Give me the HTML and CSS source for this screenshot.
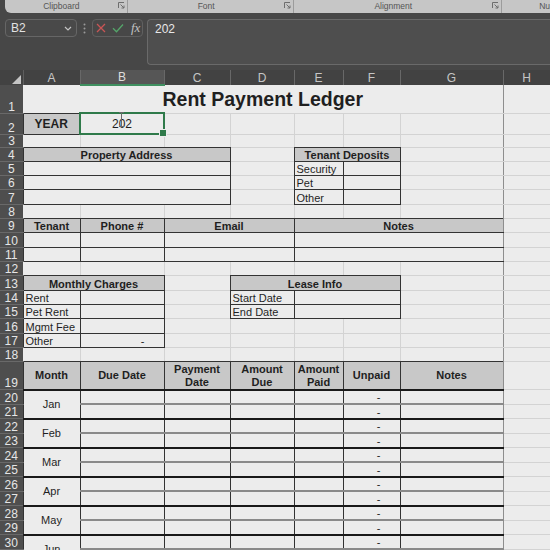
FILE: index.html
```html
<!DOCTYPE html>
<html lang="en">
<head>
    <meta charset="UTF-8">
    <meta name="viewport" content="width=device-width, initial-scale=1.0">
    <title>Rent Payment Ledger</title>
    <link rel="stylesheet" href="styles.css">
</head>
<body>
    <!-- Ribbon group labels -->
    <div class="ribbon">
        <div class="group g-clip">
            <span>Clipboard</span>
            <svg class="launch" width="7" height="7" viewBox="0 0 7 7"><path d="M0.5 6V0.5H6" fill="none" stroke="#6e6e6e"/><path d="M2.5 2.5L6 6M6 3.5V6H3.5" fill="none" stroke="#6e6e6e"/></svg>
        </div>
        <div class="group g-font">
            <span>Font</span>
            <svg class="launch" width="7" height="7" viewBox="0 0 7 7"><path d="M0.5 6V0.5H6" fill="none" stroke="#6e6e6e"/><path d="M2.5 2.5L6 6M6 3.5V6H3.5" fill="none" stroke="#6e6e6e"/></svg>
        </div>
        <div class="group g-align">
            <span>Alignment</span>
            <svg class="launch" width="7" height="7" viewBox="0 0 7 7"><path d="M0.5 6V0.5H6" fill="none" stroke="#6e6e6e"/><path d="M2.5 2.5L6 6M6 3.5V6H3.5" fill="none" stroke="#6e6e6e"/></svg>
        </div>
        <div class="group g-num"><span>Nu</span></div>
    </div>

    <!-- Name box + formula bar -->
    <div class="formula-row">
        <div class="name-box">
            <span>B2</span>
            <svg width="8" height="5" viewBox="0 0 8 5"><path d="M1 1l3 3 3-3" fill="none" stroke="#c4c4c4" stroke-width="1.2"/></svg>
        </div>
        <div class="dots">
            <svg width="3" height="11" viewBox="0 0 3 11"><circle cx="1.5" cy="1.5" r="1" fill="#9a9a9a"/><circle cx="1.5" cy="5.5" r="1" fill="#9a9a9a"/><circle cx="1.5" cy="9.5" r="1" fill="#9a9a9a"/></svg>
        </div>
        <div class="edit-box">
            <svg class="ico-x" width="10" height="10" viewBox="0 0 10 10"><path d="M1 1l8 8M9 1l-8 8" stroke="#c95555" stroke-width="1.3"/></svg>
            <svg class="ico-ok" width="12" height="10" viewBox="0 0 12 10"><path d="M1 5.2l3.5 3.5L11 1.5" fill="none" stroke="#55a56a" stroke-width="1.3"/></svg>
            <span class="fx">fx</span>
        </div>
        <div class="formula">202</div>
    </div>

    <!-- Worksheet -->
    <table class="sheet">
        <colgroup>
            <col class="c-rh"><col class="c-a"><col class="c-b"><col class="c-c"><col class="c-d"><col class="c-e"><col class="c-f"><col class="c-g"><col class="c-h">
        </colgroup>
        <thead>
            <tr class="col-heads">
                <th class="corner"><svg width="9" height="9" viewBox="0 0 9 9"><polygon points="9,0 9,9 0,9" fill="#c4c4c4"/></svg></th>
                <th class="ch">A</th><th class="ch active">B</th><th class="ch">C</th><th class="ch">D</th><th class="ch">E</th><th class="ch">F</th><th class="ch">G</th><th class="ch">H</th>
            </tr>
        </thead>
        <tbody>
            <tr class="r-title"><th class="rh">1</th><td class="title" colspan="7">Rent Payment Ledger</td><td></td></tr>
            <tr class="r-year"><th class="rh">2</th><td class="box fill year">YEAR</td><td class="sel">202<svg class="ibeam" width="7" height="15" viewBox="0 0 7 15"><path d="M1 0.5h5M3.5 0.5v14M1 14.5h5" fill="none" stroke="#6a6a6a"/></svg></td><td></td><td></td><td></td><td></td><td></td><td></td></tr>
            <tr class="r-short"><th class="rh">3</th><td></td><td></td><td></td><td></td><td></td><td></td><td></td><td></td></tr>

            <tr><th class="rh">4</th><td class="box fill" colspan="3">Property Address</td><td></td><td class="box fill" colspan="2">Tenant Deposits</td><td></td><td></td></tr>
            <tr><th class="rh">5</th><td class="box" colspan="3"></td><td></td><td class="box">Security</td><td class="box"></td><td></td><td></td></tr>
            <tr><th class="rh">6</th><td class="box" colspan="3"></td><td></td><td class="box">Pet</td><td class="box"></td><td></td><td></td></tr>
            <tr><th class="rh">7</th><td class="box" colspan="3"></td><td></td><td class="box">Other</td><td class="box"></td><td></td><td></td></tr>
            <tr><th class="rh">8</th><td></td><td></td><td></td><td></td><td></td><td></td><td></td><td></td></tr>

            <tr><th class="rh">9</th><td class="box fill">Tenant</td><td class="box fill">Phone #</td><td class="box fill" colspan="2">Email</td><td class="box fill edge" colspan="3">Notes</td><td></td></tr>
            <tr><th class="rh">10</th><td class="box"></td><td class="box"></td><td class="box" colspan="2"></td><td class="box edge" colspan="3"></td><td></td></tr>
            <tr><th class="rh">11</th><td class="box"></td><td class="box"></td><td class="box" colspan="2"></td><td class="box edge" colspan="3"></td><td></td></tr>
            <tr><th class="rh">12</th><td></td><td></td><td></td><td></td><td></td><td></td><td></td><td></td></tr>

            <tr><th class="rh">13</th><td class="box fill" colspan="2">Monthly Charges</td><td></td><td class="box fill" colspan="3">Lease Info</td><td></td><td></td></tr>
            <tr><th class="rh">14</th><td class="box">Rent</td><td class="box"></td><td></td><td class="box">Start Date</td><td class="box" colspan="2"></td><td></td><td></td></tr>
            <tr><th class="rh">15</th><td class="box">Pet Rent</td><td class="box"></td><td></td><td class="box">End Date</td><td class="box" colspan="2"></td><td></td><td></td></tr>
            <tr><th class="rh">16</th><td class="box">Mgmt Fee</td><td class="box"></td><td></td><td></td><td></td><td></td><td></td><td></td></tr>
            <tr><th class="rh">17</th><td class="box">Other</td><td class="box num">-</td><td></td><td></td><td></td><td></td><td></td><td></td></tr>
            <tr><th class="rh">18</th><td></td><td></td><td></td><td></td><td></td><td></td><td></td><td></td></tr>

            <tr class="r-head"><th class="rh">19</th><td class="box fill hdr">Month</td><td class="box fill hdr">Due Date</td><td class="box fill hdr">Payment<br>Date</td><td class="box fill hdr">Amount<br>Due</td><td class="box fill hdr">Amount<br>Paid</td><td class="box fill hdr">Unpaid</td><td class="box fill hdr edge">Notes</td><td></td></tr>

            <tr class="r-m"><th class="rh">20</th><td class="box month" rowspan="2">Jan</td><td class="box mid"></td><td class="box mid"></td><td class="box mid"></td><td class="box mid"></td><td class="box mid num">-</td><td class="box mid edge"></td><td></td></tr>
            <tr class="r-m"><th class="rh">21</th><td class="box end"></td><td class="box end"></td><td class="box end"></td><td class="box end"></td><td class="box end num">-</td><td class="box end edge"></td><td></td></tr>
            <tr class="r-m"><th class="rh">22</th><td class="box month" rowspan="2">Feb</td><td class="box mid"></td><td class="box mid"></td><td class="box mid"></td><td class="box mid"></td><td class="box mid num">-</td><td class="box mid edge"></td><td></td></tr>
            <tr class="r-m"><th class="rh">23</th><td class="box end"></td><td class="box end"></td><td class="box end"></td><td class="box end"></td><td class="box end num">-</td><td class="box end edge"></td><td></td></tr>
            <tr class="r-m"><th class="rh">24</th><td class="box month" rowspan="2">Mar</td><td class="box mid"></td><td class="box mid"></td><td class="box mid"></td><td class="box mid"></td><td class="box mid num">-</td><td class="box mid edge"></td><td></td></tr>
            <tr class="r-m"><th class="rh">25</th><td class="box end"></td><td class="box end"></td><td class="box end"></td><td class="box end"></td><td class="box end num">-</td><td class="box end edge"></td><td></td></tr>
            <tr class="r-m"><th class="rh">26</th><td class="box month" rowspan="2">Apr</td><td class="box mid"></td><td class="box mid"></td><td class="box mid"></td><td class="box mid"></td><td class="box mid num">-</td><td class="box mid edge"></td><td></td></tr>
            <tr class="r-m"><th class="rh">27</th><td class="box end"></td><td class="box end"></td><td class="box end"></td><td class="box end"></td><td class="box end num">-</td><td class="box end edge"></td><td></td></tr>
            <tr class="r-m"><th class="rh">28</th><td class="box month" rowspan="2">May</td><td class="box mid"></td><td class="box mid"></td><td class="box mid"></td><td class="box mid"></td><td class="box mid num">-</td><td class="box mid edge"></td><td></td></tr>
            <tr class="r-m"><th class="rh">29</th><td class="box end"></td><td class="box end"></td><td class="box end"></td><td class="box end"></td><td class="box end num">-</td><td class="box end edge"></td><td></td></tr>
            <tr class="r-m"><th class="rh">30</th><td class="box month" rowspan="2">Jun</td><td class="box mid"></td><td class="box mid"></td><td class="box mid"></td><td class="box mid"></td><td class="box mid num">-</td><td class="box mid edge"></td><td></td></tr>
            <tr class="r-m"><th class="rh">31</th><td class="box end"></td><td class="box end"></td><td class="box end"></td><td class="box end"></td><td class="box end num">-</td><td class="box end edge"></td><td></td></tr>
        </tbody>
    </table>
</body>
</html>
```

FILE: styles.css
```css
/* Colours */
:root {
    --chrome: #474747;
    --ribbon: #c6c6c6;
    --cell: #ececec;
    --grid: #d3d3d3;
    --fill: #c8c8c8;
    --ink: #1f1f1f;
    --line: #333333;
    --heavy: #1a1a1a;
    --green: #2f7a4a;
}

* {
    box-sizing: border-box;
}

body {
    margin: 0;
    width: 550px;
    height: 550px;
    overflow: hidden;
    background-color: var(--chrome);
    font-family: "Liberation Sans", Arial, sans-serif;
}

/* Ribbon */
.ribbon {
    display: flex;
    height: 13px;
    margin-left: 5px;
    background-color: var(--ribbon);
    border-bottom-left-radius: 6px;
}

.group {
    display: flex;
    align-items: center;
    border-right: 1px solid #9c9c9c;
}

.group span {
    flex: 1;
    text-align: center;
    font-size: 8.5px;
    line-height: 13px;
    color: #555555;
}

.g-clip { width: 123px; }
.g-font { width: 167px; }
.g-align { width: 208px; }

.g-num {
    flex: 1;
    border-right: none;
    padding-left: 37px;
}

.g-num span {
    text-align: left;
}

.launch {
    margin-right: 2px;
    margin-top: -2px;
}

/* Formula bar */
.formula-row {
    display: flex;
    align-items: flex-start;
    height: 57px;
    padding: 6px 0 0 5px;
}

.name-box {
    width: 72px;
    height: 18px;
    display: flex;
    align-items: center;
    justify-content: space-between;
    padding: 0 4px 0 5px;
    border: 1px solid #666666;
    border-radius: 4px;
    background-color: #494949;
    color: #e2e2e2;
    font-size: 12px;
}

.dots {
    width: 15px;
    height: 18px;
    display: flex;
    align-items: center;
    justify-content: center;
}

.edit-box {
    width: 51px;
    height: 18px;
    display: flex;
    align-items: center;
    padding-left: 3px;
    border: 1px solid #606060;
    border-radius: 4px;
}

.ico-ok {
    margin-left: 6px;
}

.fx {
    margin-left: 7px;
    font-family: "Liberation Serif", "Times New Roman", serif;
    font-style: italic;
    font-size: 13px;
    color: #c2c2c2;
}

.formula {
    flex: 1;
    height: 46px;
    margin-left: 4px;
    padding: 1px 7px;
    border: 1px solid #6a6a6a;
    border-right: none;
    border-radius: 4px 0 0 4px;
    background-color: #4e4e4e;
    color: #e8e8e8;
    font-size: 12px;
    line-height: 16px;
}

/* Worksheet grid */
.sheet {
    border-collapse: collapse;
    table-layout: fixed;
    width: 550px;
    background-color: var(--cell);
    color: var(--ink);
    font-size: 11px;
}

.sheet col {
    border-right: 1px solid var(--grid);
}

.sheet col.c-rh { width: 23px; border-right: none; }
.sheet col.c-a { width: 57px; }
.sheet col.c-b { width: 84px; }
.sheet col.c-c { width: 66px; }
.sheet col.c-d { width: 64px; }
.sheet col.c-e { width: 49px; }
.sheet col.c-f { width: 57px; }
.sheet col.c-g { width: 103px; border-right-color: #8e8e8e; }
.sheet col.c-h { width: 47px; }

.col-heads {
    height: 15px;
}

.corner {
    padding: 0 2px 1px 0;
    background-color: #424242;
    text-align: right;
    vertical-align: bottom;
    line-height: 0;
    border-right: 1px solid #5e5e5e;
}

.ch {
    padding: 0;
    background-color: #424242;
    color: #c6c6c6;
    font-size: 12px;
    font-weight: normal;
    line-height: 14px;
    border-right: 1px solid #686868;
}

.ch.active {
    background-color: #565656;
    color: #dedede;
    border-bottom: 2px solid #3f9060;
}

tbody tr {
    height: 14.33px;
    border-bottom: 1px solid var(--grid);
}

tbody tr.r-title { height: 28px; }
tbody tr.r-year { height: 21px; }
tbody tr.r-short { height: 13px; }
tbody tr.r-head { height: 28px; }
tbody tr.r-m { height: 14.5px; }

.rh {
    padding: 0;
    background-color: #4e4e4e;
    color: #e6e6e6;
    font-size: 12px;
    font-weight: normal;
    line-height: 12px;
    text-align: center;
    vertical-align: bottom;
    border-bottom: 1px solid #696969;
}

td {
    padding: 0 2px;
    line-height: 12px;
    vertical-align: bottom;
    white-space: nowrap;
}

.title {
    padding-bottom: 2px;
    font-size: 19.5px;
    font-weight: bold;
    line-height: 22px;
    text-align: center;
}

.box {
    border: 1px solid var(--line);
}

.fill {
    background-color: var(--fill);
    font-weight: bold;
    text-align: center;
}

.year {
    font-size: 12px;
    vertical-align: middle;
}

.sel {
    position: relative;
    border: 2px solid var(--green);
    text-align: center;
    font-size: 12px;
    vertical-align: middle;
}

/* fill handle */
.sel::after {
    content: "";
    position: absolute;
    right: -4px;
    bottom: -4px;
    width: 6px;
    height: 6px;
    background-color: var(--green);
    border: 1px solid var(--cell);
}

.ibeam {
    position: absolute;
    left: 37px;
    top: -2px;
}

.hdr {
    line-height: 13px;
    vertical-align: middle;
    border-bottom: 2px solid var(--heavy);
}

.month {
    text-align: center;
    vertical-align: middle;
    border-bottom: 2px solid var(--heavy);
}

.mid {
    border-bottom: 2px solid #8a8a8a;
}

.end {
    border-bottom: 2px solid var(--heavy);
}

.num {
    text-align: right;
    padding-right: 19px;
}

.edge {
    border-right-color: #8e8e8e;
}
```
